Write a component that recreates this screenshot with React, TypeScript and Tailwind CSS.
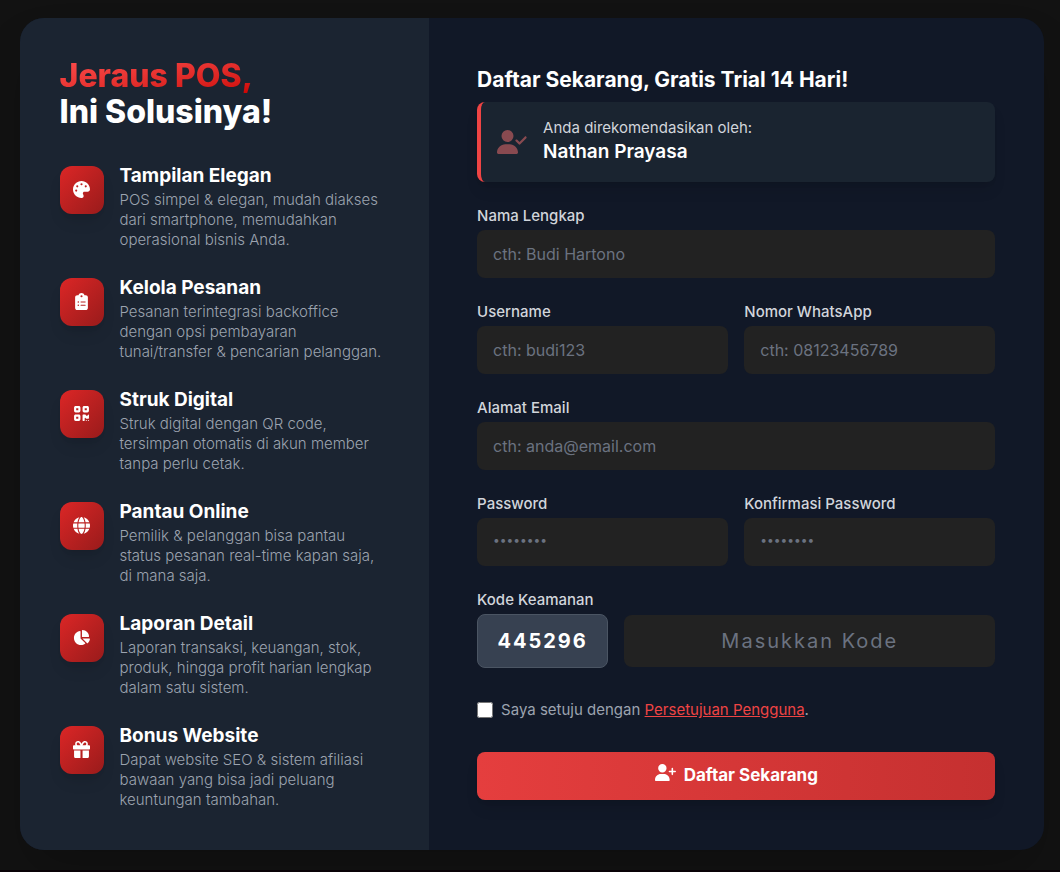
import type { InputHTMLAttributes } from "react";
import type { IconType } from "react-icons";
import {
  FaChartPie,
  FaClipboardList,
  FaGift,
  FaGlobe,
  FaPalette,
  FaQrcode,
  FaUserCheck,
  FaUserPlus,
} from "react-icons/fa6";

type Feature = {
  icon: IconType;
  title: string;
  text: string;
};

const features: Feature[] = [
  {
    icon: FaPalette,
    title: "Tampilan Elegan",
    text: "POS simpel & elegan, mudah diakses\ndari smartphone, memudahkan\noperasional bisnis Anda.",
  },
  {
    icon: FaClipboardList,
    title: "Kelola Pesanan",
    text: "Pesanan terintegrasi backoffice\ndengan opsi pembayaran\ntunai/transfer & pencarian pelanggan.",
  },
  {
    icon: FaQrcode,
    title: "Struk Digital",
    text: "Struk digital dengan QR code,\ntersimpan otomatis di akun member\ntanpa perlu cetak.",
  },
  {
    icon: FaGlobe,
    title: "Pantau Online",
    text: "Pemilik & pelanggan bisa pantau\nstatus pesanan real-time kapan saja,\ndi mana saja.",
  },
  {
    icon: FaChartPie,
    title: "Laporan Detail",
    text: "Laporan transaksi, keuangan, stok,\nproduk, hingga profit harian lengkap\ndalam satu sistem.",
  },
  {
    icon: FaGift,
    title: "Bonus Website",
    text: "Dapat website SEO & sistem afiliasi\nbawaan yang bisa jadi peluang\nkeuntungan tambahan.",
  },
];

const FeatureItem = ({ icon: Icon, title, text }: Feature) => (
  <li className="flex items-start gap-4">
    <div className="flex h-12 w-11 shrink-0 items-center justify-center rounded-xl bg-gradient-to-br from-[#dc2626] to-[#991b1b] pb-0.5 text-[17px] text-white shadow-lg">
      <Icon />
    </div>
    <div>
      <h3 className="mb-1 text-[19px] leading-5 font-bold text-white">{title}</h3>
      <p className="text-[15px] leading-5 font-light whitespace-pre-line text-[#9ca3af]">{text}</p>
    </div>
  </li>
);

type FieldProps = InputHTMLAttributes<HTMLInputElement> & {
  id: string;
  label: string;
};

const Field = ({ id, label, ...props }: FieldProps) => (
  <div>
    <label htmlFor={id} className="mb-1 block text-[15px] leading-5 font-medium text-[#d1d5db]">
      {label}
    </label>
    <input
      id={id}
      name={id}
      className="h-12 w-full rounded-lg bg-[#222222] px-4 text-base text-white outline-none placeholder:text-[#6b7280] focus:ring-2 focus:ring-[#ef4444] [&[type=password]]:pb-2 [&[type=password]]:placeholder:text-xs"
      {...props}
    />
  </div>
);

export default function App() {
  return (
    <main className="min-h-screen border-b-2 border-[#0a0307] bg-[#121212] pt-[18px] pr-4 pb-5 pl-[19px] font-['Inter','Noto_Sans',sans-serif]">
      <div className="mx-auto flex max-w-5xl flex-col overflow-hidden rounded-3xl bg-[#111827] shadow-2xl md:flex-row">
        <section className="bg-[#1b2431] p-10 md:w-2/5">
          <h1 className="mb-9 text-[32px] leading-9 font-extrabold text-white">
            <span className="inline-block bg-gradient-to-br from-[#ff4d4d] to-[#cc0000] bg-clip-text text-transparent">
              Jeraus POS,
            </span>
            <br />
            Ini Solusinya!
          </h1>
          <ul className="flex flex-col gap-7">
            {features.map((feature) => (
              <FeatureItem key={feature.title} {...feature} />
            ))}
          </ul>
        </section>

        <section className="p-12 md:w-3/5">
          <h2 className="mb-2 text-[21px] leading-7 font-bold text-white">
            Daftar Sekarang, Gratis Trial 14 Hari!
          </h2>

          <div className="mb-6 flex items-center gap-4 rounded-lg border-l-4 border-[#ef4444] bg-[#1a2430] p-4 shadow-lg">
            <FaUserCheck className="h-6 w-[30px] text-[#f87171] opacity-50" />
            <div>
              <p className="text-[15px] leading-5 text-[#d1d5db]">Anda direkomendasikan oleh:</p>
              <p className="text-[19px] leading-7 font-semibold text-white">Nathan Prayasa</p>
            </div>
          </div>

          <form onSubmit={(e) => e.preventDefault()}>
            <div className="flex flex-col gap-6">
              <Field id="name" label="Nama Lengkap" type="text" placeholder="cth: Budi Hartono" />
              <div className="grid gap-6 sm:grid-cols-2 sm:gap-4">
                <Field id="username" label="Username" type="text" placeholder="cth: budi123" />
                <Field id="whatsapp" label="Nomor WhatsApp" type="tel" placeholder="cth: 08123456789" />
              </div>
              <Field id="email" label="Alamat Email" type="email" placeholder="cth: anda@email.com" />
              <div className="grid gap-6 sm:grid-cols-2 sm:gap-4">
                <Field id="password" label="Password" type="password" placeholder="••••••••" />
                <Field id="confirm" label="Konfirmasi Password" type="password" placeholder="••••••••" />
              </div>
              <div>
                <label htmlFor="code" className="mb-1 block text-[15px] leading-5 font-medium text-[#d1d5db]">
                  Kode Keamanan
                </label>
                <div className="flex items-center gap-4">
                  <div className="flex h-[54px] w-[131px] shrink-0 items-center justify-center rounded-lg border border-[#4b5563] bg-[#374151] text-xl font-bold tracking-widest text-white">
                    445296
                  </div>
                  <input
                    id="code"
                    name="code"
                    type="text"
                    placeholder="Masukkan Kode"
                    className="h-[52px] w-full min-w-0 rounded-lg bg-[#222222] px-4 text-center text-xl tracking-widest text-white outline-none placeholder:text-[#6b7280] focus:ring-2 focus:ring-[#ef4444]"
                  />
                </div>
              </div>
            </div>

            <div className="my-8 flex items-center gap-2">
              <input id="terms" name="terms" type="checkbox" className="size-4" />
              <label htmlFor="terms" className="text-[15px] leading-5 text-[#9ca3af]">
                Saya setuju dengan{" "}
                <a href="#terms" className="text-[#ef4444] underline">
                  Persetujuan Pengguna
                </a>
                .
              </label>
            </div>

            <button
              type="submit"
              className="flex h-12 w-full items-center justify-center gap-2 rounded-lg bg-gradient-to-r from-[#e53e3e] to-[#c53030] text-[17px] font-bold text-white shadow-lg"
            >
              <FaUserPlus className="mb-2 h-[17px] w-[21px]" />
              Daftar Sekarang
            </button>
          </form>
        </section>
      </div>
    </main>
  );
}
